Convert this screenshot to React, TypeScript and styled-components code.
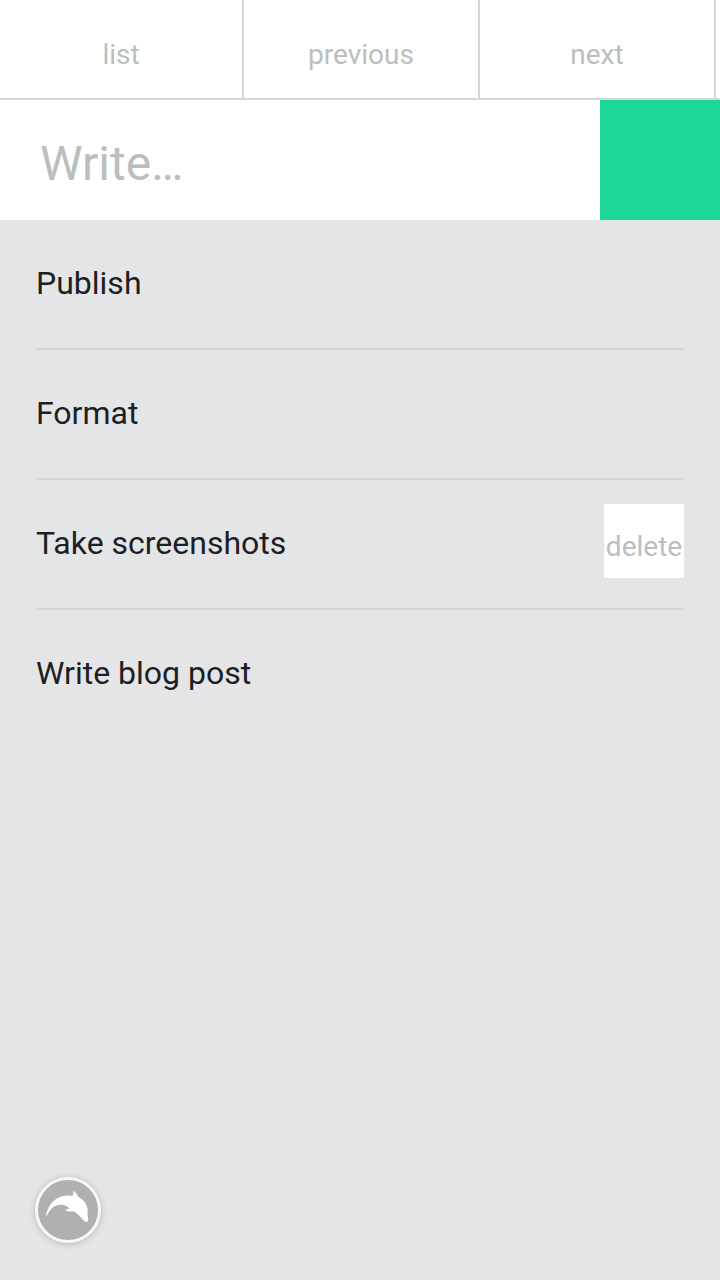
import React, { useState } from "react";
import styled, { createGlobalStyle } from "styled-components";

const GlobalStyle = createGlobalStyle`
  *, *::before, *::after { box-sizing: border-box; }
  body {
    margin: 0;
    background: #e4e5e7;
    font-family: Roboto, "Liberation Sans", sans-serif;
  }
  button, input { font-family: inherit; border: 0; border-radius: 0; }
`;

const Page = styled.div`
  display: flex;
  flex-direction: column;
  min-height: 100vh;
`;

const Tabs = styled.nav`
  display: grid;
  grid-template-columns: 61fr 59fr 59fr;
  padding-right: 4px;
  background: #fff;
  border-bottom: 2px solid #d5d6d8;
`;

const Tab = styled.button`
  padding: 39px 0 27px;
  background: #fff;
  border-right: 2px solid #d5d6d8;
  color: #babebe;
  font-size: 28px;
  line-height: 32px;
  cursor: pointer;
`;

const Composer = styled.form`
  display: flex;
  height: 120px;
  background: #fff;
`;

const TextBox = styled.input`
  flex: 1;
  min-width: 0;
  padding: 6px 40px 0;
  background: #fff;
  color: #1d1f22;
  font-size: 48px;
  outline: none;
  &::placeholder { color: #babebe; opacity: 1; }
`;

const AddButton = styled.button`
  width: 120px;
  background: #1dd698;
  cursor: pointer;
`;

const Items = styled.ul`
  flex: 1;
  margin: 0;
  padding: 0 36px;
  list-style: none;
`;

const Item = styled.li`
  display: flex;
  align-items: flex-start;
  justify-content: space-between;
  min-height: 130px;
  padding-top: 24px;
  border-bottom: 2px solid #d5d6d8;
  &:last-child { border-bottom: 0; }
`;

const Label = styled.span`
  color: #1d1f22;
  font-size: 32px;
  line-height: 78px;
`;

const DeleteButton = styled.button`
  width: 80px;
  height: 74px;
  padding: 12px 0 0;
  background: #fff;
  color: #babebe;
  font-size: 28px;
  line-height: 32px;
  cursor: pointer;
`;

const Footer = styled.footer`
  display: flex;
  padding: 36px;
`;

const Badge = styled.button`
  display: flex;
  width: 64px;
  height: 66px;
  padding: 0;
  background: none;
  cursor: pointer;
  svg { overflow: visible; filter: drop-shadow(0 1px 3px rgba(0, 0, 0, 0.2)); }
`;

const tasks = ["Publish", "Format", "Take screenshots", "Write blog post"];

export default function App() {
  const [text, setText] = useState("");
  return (
    <Page>
      <GlobalStyle />
      <Tabs>
        <Tab type="button">list</Tab>
        <Tab type="button">previous</Tab>
        <Tab type="button">next</Tab>
      </Tabs>
      <Composer onSubmit={(e) => e.preventDefault()}>
        <TextBox
          aria-label="New task"
          placeholder="Write…"
          value={text}
          onChange={(e) => setText(e.target.value)}
        />
        <AddButton type="submit" aria-label="Add" />
      </Composer>
      <Items>
        {tasks.map((task) => (
          <Item key={task}>
            <Label>{task}</Label>
            {task === "Take screenshots" && <DeleteButton type="button">delete</DeleteButton>}
          </Item>
        ))}
      </Items>
      <Footer>
        <Badge type="button" aria-label="Menu">
          <svg width="64" height="66" viewBox="0 0 64 66">
            <circle cx="32" cy="32" r="31.5" fill="#afb0b2" stroke="#f6f7f7" strokeWidth="3" />
            <path
              fill="#fff"
              d="M10 37.5C11 32 14 24.500 20.700 20.700C25.500 17.800 31 17 36.300 18C37.300 16.500 37.500 14.500 37.500 12.800C39.800 14.200 41.200 16 42 18.700C45 20.300 47.800 22.500 49.300 25C51.500 28.500 52 32 51.600 36C51.600 37.500 52.100 39 52.200 41C52.200 42.500 51.500 43.600 50.800 43.900C49 43.900 47.500 42.500 46 40.500C43.500 38 41 35 38 33.200C34.500 34 30.500 33.500 29 31.700C30.500 31.300 32.500 31 33.300 30.400C31.500 28 28.500 26.700 25 26.700C18.500 26.700 14.500 30.500 10.700 37.700Z"
            />
          </svg>
        </Badge>
      </Footer>
    </Page>
  );
}
